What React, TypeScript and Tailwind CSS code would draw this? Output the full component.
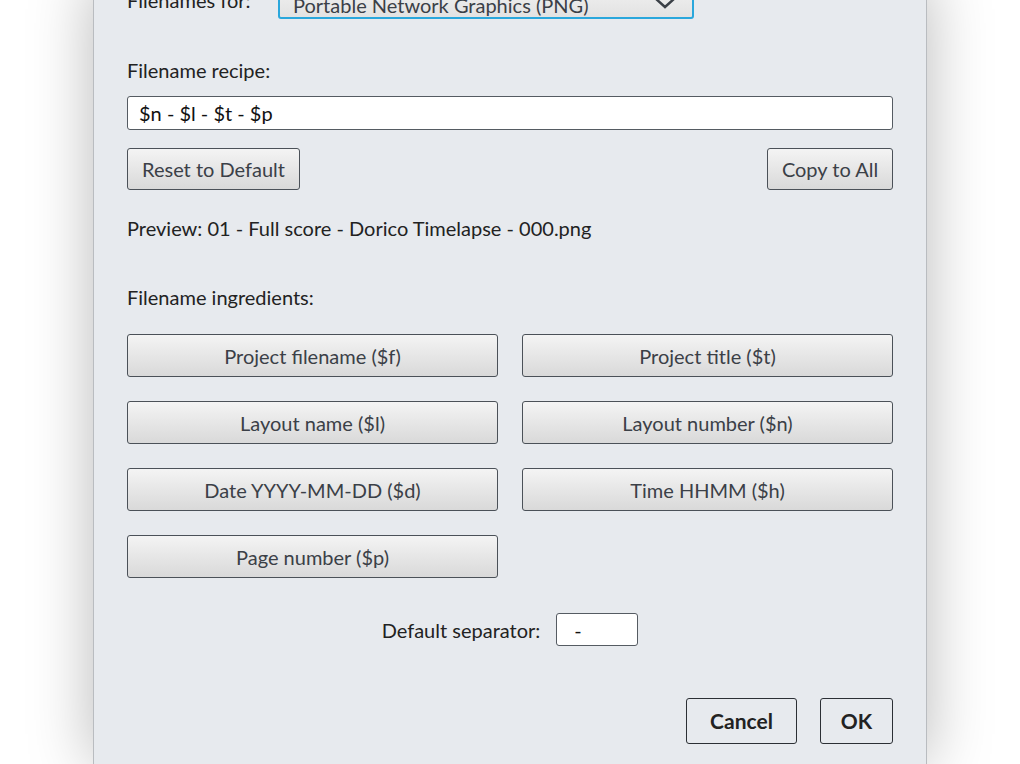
import React from "react";

const ingredients = [
  "Project filename ($f)",
  "Project title ($t)",
  "Layout name ($l)",
  "Layout number ($n)",
  "Date YYYY-MM-DD ($d)",
  "Time HHMM ($h)",
  "Page number ($p)",
];

const grayBtn =
  "h-[42px] rounded-[3px] border border-[#4b5158] bg-gradient-to-b from-[#f4f4f4] to-[#d9d9d9] text-[20px] text-[#3b4047]";

export default function App() {
  return (
    <div
      className="flex h-[764px] w-full justify-center overflow-hidden bg-white"
      style={{ fontFamily: "Lato, 'Liberation Sans', sans-serif" }}
    >
      <div className="-mt-[21px] flex w-[834px] flex-col border-x border-[#b9bcc0] bg-[#e7eaee] px-[33px] shadow-[0_0_60px_rgba(0,0,0,0.28)]">
        {/* Filenames for */}
        <div className="flex h-[40px] items-end gap-[22px]">
          <span className="w-[129px] pb-[7px] text-[20px] leading-[24px] text-[#222]">Filenames for:</span>
          <div className="flex h-[40px] w-[416px] items-center justify-between rounded-[3px] border-2 border-[#2aa7dc] bg-gradient-to-b from-[#f4f4f4] to-[#e2e2e2] pl-[13px] pr-[14px] text-[20px] text-[#3b4047]">
            <span className="pt-[12px]">Portable Network Graphics (PNG)</span>
            <svg width="26" height="14" viewBox="0 0 26 14" className="mt-[6px]">
              <path d="M3 3 L13 12 L23 3" fill="none" stroke="#3b4047" strokeWidth="2.5" />
            </svg>
          </div>
        </div>

        <div className="mt-[39px] h-[24px] text-[20px] leading-[24px] text-[#222]">Filename recipe:</div>
        <div className="mt-[14px] flex h-[34px] items-center rounded-[3px] border border-[#555b62] bg-white px-[11px] text-[20px] text-[#111]">
          $n - $l - $t - $p
        </div>

        <div className="mt-[18px] flex justify-between">
          <button className={`${grayBtn} w-[173px]`}>Reset to Default</button>
          <button className={`${grayBtn} w-[126px]`}>Copy to All</button>
        </div>

        <div className="mt-[26px] h-[24px] text-[20px] leading-[24px] text-[#222]">
          Preview: 01 - Full score - Dorico Timelapse - 000.png
        </div>

        <div className="mt-[45px] h-[24px] text-[20px] leading-[24px] text-[#222]">Filename ingredients:</div>

        <div className="mt-[25px] grid grid-cols-2 gap-x-[24px] gap-y-[24px]">
          {ingredients.map((t) => (
            <button key={t} className={`${grayBtn} h-[43px]`}>
              {t}
            </button>
          ))}
        </div>

        <div className="mt-[35px] flex items-center justify-center gap-[16px]">
          <span className="text-[20px] text-[#222]">Default separator:</span>
          <div className="flex h-[33px] w-[82px] items-center rounded-[3px] border border-[#555b62] bg-white px-[17px] text-[20px] text-[#111]">
            -
          </div>
        </div>

        <div className="mt-[52px] flex justify-end gap-[23px]">
          <button className="h-[46px] w-[111px] rounded-[3px] border-[1.5px] border-[#2c3035] text-[21px] font-bold text-[#222]">
            Cancel
          </button>
          <button className="h-[46px] w-[73px] rounded-[3px] border-[1.5px] border-[#2c3035] text-[21px] font-bold text-[#222]">
            OK
          </button>
        </div>
      </div>
    </div>
  );
}
